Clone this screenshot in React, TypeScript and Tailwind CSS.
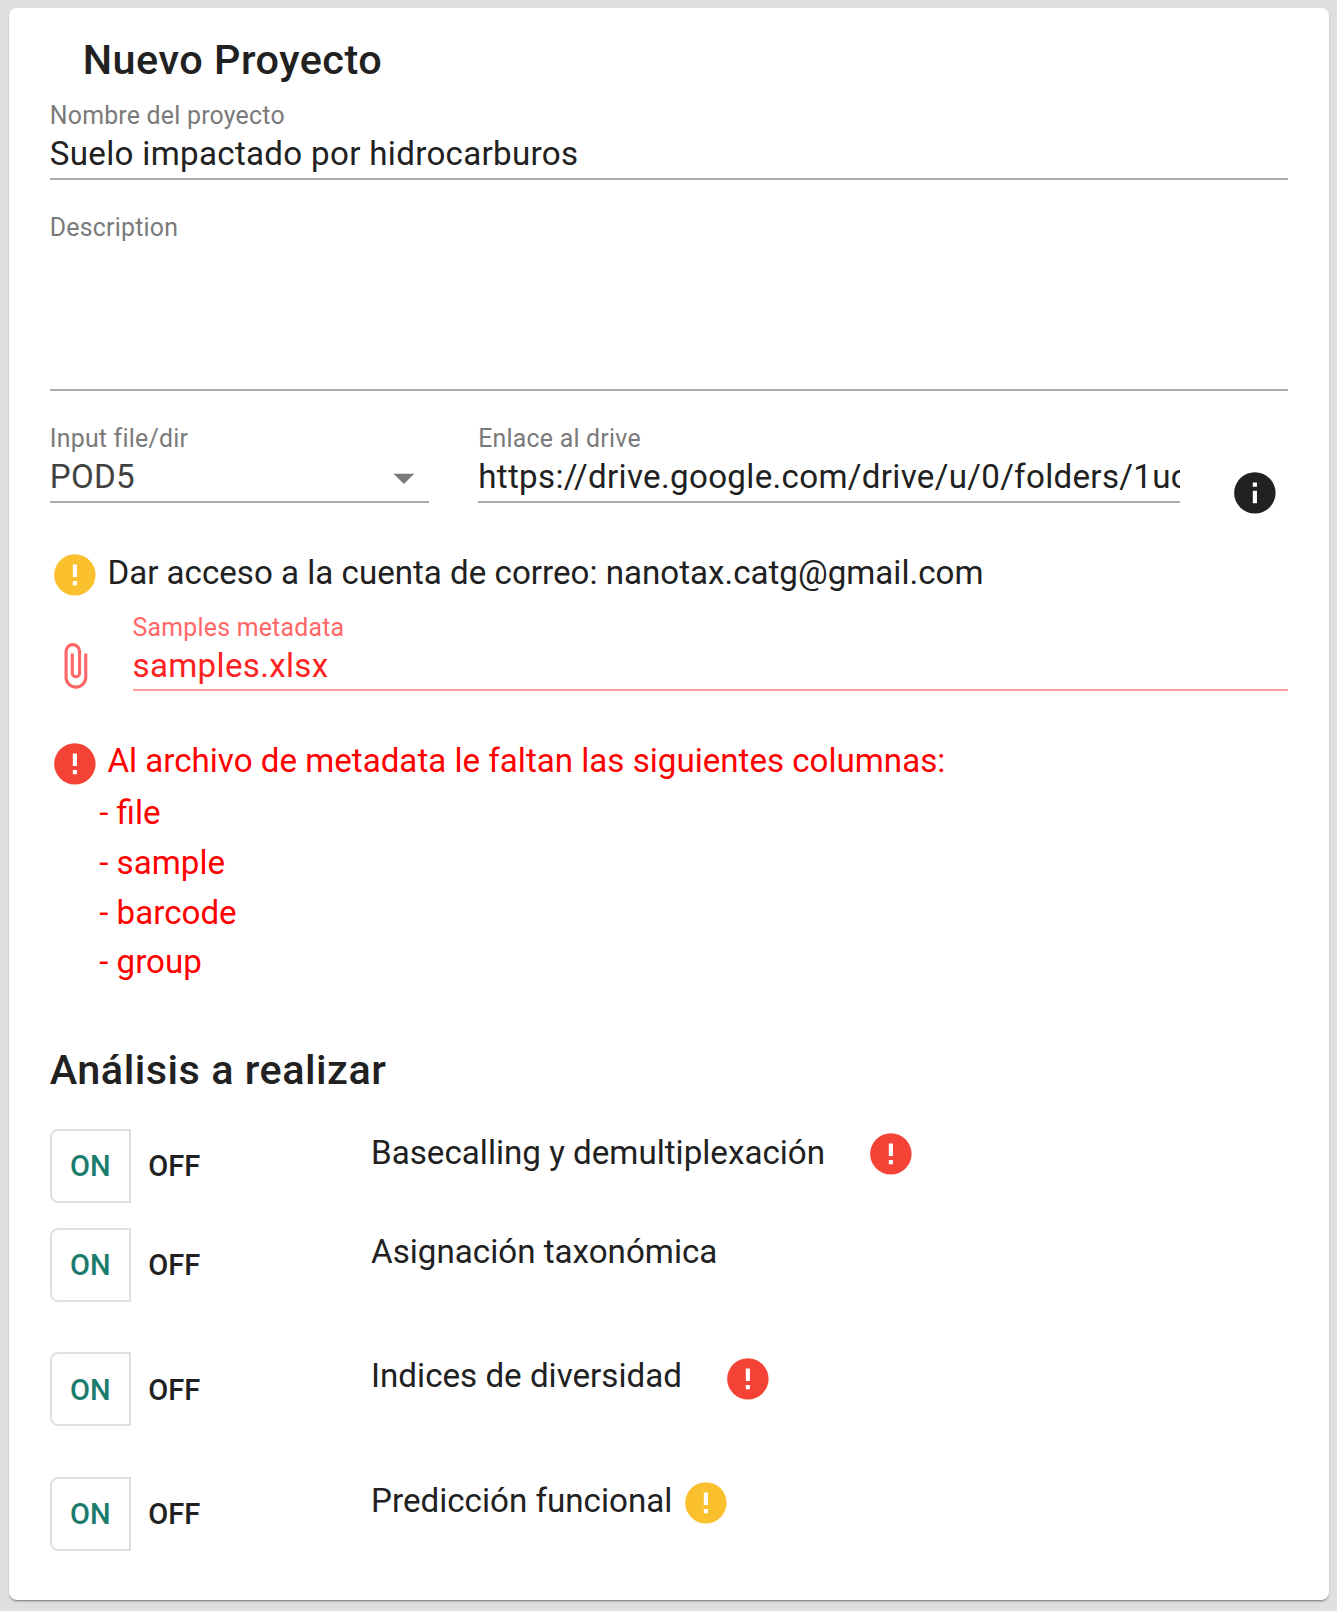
import React from "react";

const ALERT =
  "M13,13H11V7H13M13,17H11V15H13M12,2A10,10 0 0,0 2,12A10,10 0 0,0 12,22A10,10 0 0,0 22,12A10,10 0 0,0 12,2Z";
const INFO =
  "M13,9H11V7H13M13,17H11V11H13M12,2A10,10 0 0,0 2,12A10,10 0 0,0 12,22A10,10 0 0,0 22,12A10,10 0 0,0 12,2Z";
const CLIP =
  "M16.5,6V17.5A4,4 0 0,1 12.5,21.5A4,4 0 0,1 8.5,17.5V5A2.5,2.5 0 0,1 11,2.5A2.5,2.5 0 0,1 13.5,5V15.5A1,1 0 0,1 12.5,16.5A1,1 0 0,1 11.5,15.5V6H10V15.5A2.5,2.5 0 0,0 12.5,18A2.5,2.5 0 0,0 15,15.5V5A4,4 0 0,0 11,1A4,4 0 0,0 7,5V17.5A5.5,5.5 0 0,0 12.5,23A5.5,5.5 0 0,0 18,17.5V6H16.5Z";
const MENU_DOWN = "M7,10L12,15L17,10H7Z";

function Icon({ d, className }: { d: string; className: string }) {
  return (
    <svg viewBox="0 0 24 24" className={`size-[49.75px] shrink-0 fill-current ${className}`}>
      <path d={d} />
    </svg>
  );
}

type FieldProps = {
  label: string;
  value?: string;
  className?: string;
  tone?: "default" | "error";
  valueClass?: string;
  children?: React.ReactNode;
};

function Field({
  label,
  value,
  className = "",
  tone = "default",
  valueClass = "h-[46.1px] leading-[44.4px]",
  children,
}: FieldProps) {
  const error = tone === "error";
  return (
    <div className={`flex flex-col border-b-2 ${error ? "border-[#ff9e9e]" : "border-[#ababab]"} ${className}`}>
      <span
        className={`text-[24.86px] leading-[31.4px] tracking-[0.0094em] ${error ? "text-[#ff6666]" : "text-[#7a7a7a]"}`}
      >
        {label}
      </span>
      <div
        className={`flex justify-between overflow-hidden whitespace-nowrap text-[33.14px] tracking-[0.0094em] ${valueClass}`}
      >
        <span>{value}</span>
        {children}
      </div>
    </div>
  );
}

function Toggle() {
  return (
    <div className="flex h-[74px] w-[321.3px] shrink-0 text-[29.02px] font-medium">
      <button className="flex w-[80.9px] items-center justify-center rounded-l-[8px] border-2 border-[#e0e0e0] pt-[2.4px] text-[#1b7c6d]">
        ON
      </button>
      <button className="flex items-center pl-[17.6px] pt-[2.4px]">OFF</button>
    </div>
  );
}

const analyses = [
  { name: "Basecalling y demultiplexación", icon: "ml-[40.7px] text-[#f44336]", row: "h-[99.4px]" },
  { name: "Asignación taxonómica", icon: "", row: "h-[124.3px]" },
  { name: "Indices de diversidad", icon: "ml-[41px] mt-[1.6px] text-[#f44336]", row: "h-[124.3px]" },
  { name: "Predicción funcional", icon: "ml-[8.8px] mt-[1.6px] text-[#fbc02d]", row: "h-[74.5px]" },
];

export default function App() {
  return (
    <div className="h-[1611px] bg-[#dfdfdf] pl-[9px] pr-2 pt-2 font-[Roboto,sans-serif] text-[#212121]">
      <main className="h-[1592px] rounded-[8px] bg-white pl-[40.75px] pr-[41px] pt-[19px] shadow-[0_2px_1px_-1px_rgba(0,0,0,0.24),0_2px_2px_0_rgba(0,0,0,0.18)]">
        <h1 className="pl-[33px] text-[41.4px] font-medium leading-[66px] tracking-[0.0118em]">Nuevo Proyecto</h1>
        <Field className="mt-[7.3px]" label="Nombre del proyecto" value="Suelo impactado por hidrocarburos" />
        <Field className="mt-[32.6px]" label="Description" valueClass="h-[145.2px]" />

        <div className="mt-[32.5px] flex h-[79.5px] items-start">
          <Field
            className="w-[379.2px]"
            label="Input file/dir"
            value="POD5"
            valueClass="h-[46.1px] leading-[44.4px] text-[#424242]"
          >
            <Icon d={MENU_DOWN} className="-mt-[2px] text-[#7a7a7a]" />
          </Field>
          <Field
            className="ml-[49.3px] w-[701.5px]"
            label="Enlace al drive"
            value="https://drive.google.com/drive/u/0/folders/1uc"
          />
          <Icon d={INFO} className="ml-[50px] mt-[44.3px]" />
        </div>

        <div className="mt-[47.4px] flex h-[61.6px]">
          <Icon d={ALERT} className="text-[#fbc02d]" />
          <p className="ml-[7.9px] text-[33.14px] leading-[45px]">
            Dar acceso a la cuenta de correo: nanotax.catg@gmail.com
          </p>
        </div>

        <div className="flex h-[79.5px] items-start">
          <Icon d={CLIP} className="mt-[29.5px] text-[#ff6666]" />
          <Field
            className="ml-[33px] grow"
            tone="error"
            label="Samples metadata"
            value="samples.xlsx"
            valueClass="h-[46.1px] leading-[45.6px] text-[#ff2222]"
          />
        </div>

        <div className="mt-[47.3px] flex h-[49.4px] text-[#ff0000]">
          <Icon d={ALERT} className="text-[#f44336]" />
          <p className="ml-[7.9px] text-[33.14px] leading-[44px]">
            Al archivo de metadata le faltan las siguientes columnas:
          </p>
        </div>
        <ul className="ml-[49.5px] text-[33.14px] leading-[49.7px] text-[#ff0000]">
          <li>- file</li>
          <li>- sample</li>
          <li>- barcode</li>
          <li>- group</li>
        </ul>

        <h2 className="mt-[50.5px] text-[41.4px] font-medium leading-[66px] tracking-[0.012em]">
          Análisis a realizar
        </h2>
        <section className="mt-[25.1px]">
          {analyses.map((a) => (
            <div key={a.name} className={`flex items-start ${a.row}`}>
              <Toggle />
              <span className="text-[33.17px] leading-[47px]">{a.name}</span>
              {a.icon && <Icon d={ALERT} className={a.icon} />}
            </div>
          ))}
        </section>
      </main>
    </div>
  );
}
